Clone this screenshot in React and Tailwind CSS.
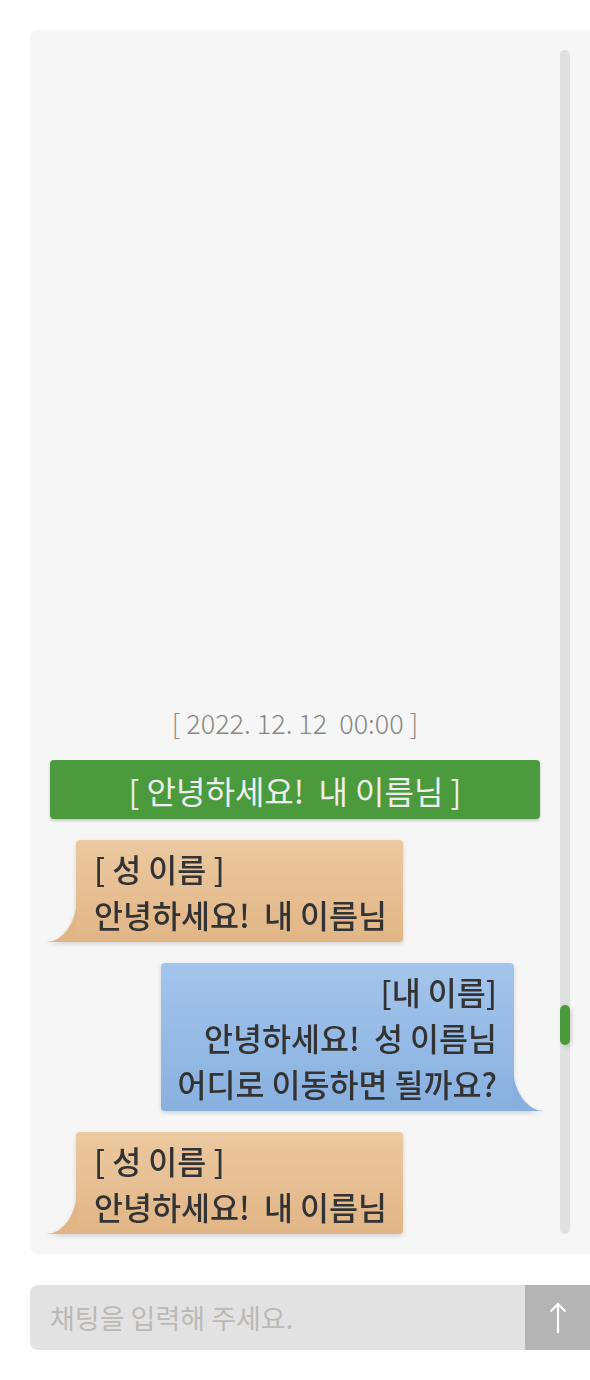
import { useState } from "react";

const font = { fontFamily: '"Noto Sans CJK KR", "Noto Sans", sans-serif' };

const messages = [
  { id: 1, mine: false, name: "[ 성 이름 ]", lines: ["안녕하세요!  내 이름님"] },
  { id: 2, mine: true, name: "[내 이름]", lines: ["안녕하세요!  성 이름님", "어디로 이동하면 될까요?"] },
  { id: 3, mine: false, name: "[ 성 이름 ]", lines: ["안녕하세요!  내 이름님"] },
];

function Bubble({ msg }) {
  if (msg.mine) {
    return (
      <div className="flex justify-end pr-[26px] drop-shadow-[0_2px_2px_rgba(0,0,0,0.15)]">
        <div className="relative">
          <div className="rounded-[4px] rounded-br-none bg-gradient-to-b from-[#a4c5eb] to-[#88b0df] px-[17px] py-[5px] text-right text-[31.5px] leading-[46px] font-medium text-[#333] whitespace-pre">
            <div>{msg.name}</div>
            {msg.lines.map((l) => (
              <div key={l}>{l}</div>
            ))}
          </div>
          <svg className="absolute -right-[30px] bottom-0" width="31" height="44" viewBox="0 0 31 44">
            <path d="M0 0 A31 44 0 0 0 31 44 L0 44 Z" fill="#88b0df" />
          </svg>
        </div>
      </div>
    );
  }
  return (
    <div className="flex justify-start pl-[26px] drop-shadow-[0_2px_2px_rgba(0,0,0,0.15)]">
      <div className="relative">
        <div className="rounded-[4px] rounded-bl-none bg-gradient-to-b from-[#ecc9a1] to-[#e1b586] pl-[18px] pr-[16px] py-[5px] text-[31.5px] leading-[46px] font-medium text-[#333] whitespace-pre">
          <div>{msg.name}</div>
          {msg.lines.map((l) => (
            <div key={l}>{l}</div>
          ))}
        </div>
        <svg className="absolute -left-[30px] bottom-0" width="31" height="44" viewBox="0 0 31 44">
          <path d="M31 0 A31 44 0 0 1 0 44 L31 44 Z" fill="#e1b586" />
        </svg>
      </div>
    </div>
  );
}

export default function App() {
  const [text, setText] = useState("");

  return (
    <div className="min-h-screen bg-white pl-[30px] pt-[30px] overflow-hidden" style={font}>
      {/* chat panel */}
      <div className="flex h-[1224px] rounded-l-lg bg-[#f6f6f6]">
        <div className="flex flex-1 flex-col justify-end gap-[21px] pl-5 pr-5 pb-[20px]">
          <div className="text-center text-[27px] font-light leading-[32px] text-[#888] whitespace-pre">
            [ 2022. 12. 12  00:00 ]
          </div>
          <div className="flex h-[59px] items-center justify-center rounded-[4px] bg-[#4b9a3d] text-[32px] text-[#eeeeee] whitespace-pre shadow-[0_2px_3px_rgba(0,0,0,0.18)]">
            [ 안녕하세요!  내 이름님 ]
          </div>
          {messages.map((m) => (
            <Bubble key={m.id} msg={m} />
          ))}
        </div>
        <div className="w-[30px] shrink-0 py-5">
          <div className="relative h-full w-[10px] rounded-full bg-[#e0e0e0]">
            <div className="absolute top-[955px] h-[40px] w-[10px] rounded-full bg-[#4a9a3c] shadow-[2px_2px_4px_rgba(0,0,0,0.15)]" />
          </div>
        </div>
      </div>

      {/* input bar */}
      <div className="mt-[31px] flex h-[65px]">
        <input
          className="h-full flex-1 rounded-l-lg bg-[#e2e2e2] px-5 text-[27px] text-[#555] outline-none placeholder:text-[#bcb9b5]"
          placeholder="채팅을 입력해 주세요."
          value={text}
          onChange={(e) => setText(e.target.value)}
          style={font}
        />
        <button className="flex h-full w-[65px] shrink-0 items-center justify-center bg-[#b4b4b4]">
          <svg width="18" height="32" viewBox="0 0 18 32" fill="none" stroke="white" strokeWidth="2.2">
            <path d="M9 31 V2" />
            <path d="M1.5 9.5 L9 2 L16.5 9.5" />
          </svg>
        </button>
      </div>
    </div>
  );
}
